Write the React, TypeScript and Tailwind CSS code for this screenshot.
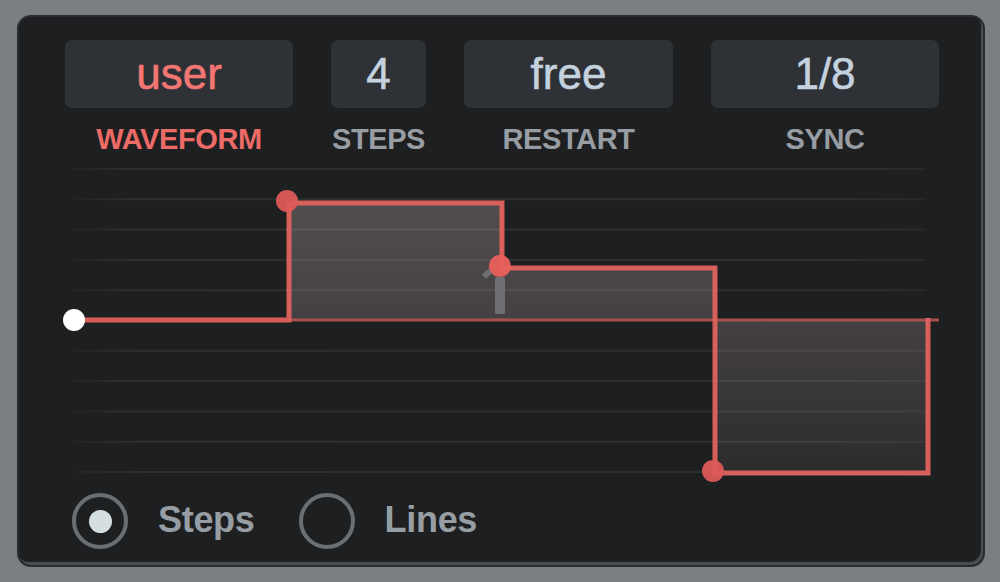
import React from "react";

const font = { fontFamily: '"Liberation Sans", Arial, sans-serif' };

function Field({ value, label, w, active }: { value: string; label: string; w: string; active?: boolean }) {
  return (
    <div className={`flex flex-col items-center ${w}`}>
      <div
        className={`w-full h-[68px] rounded-[7px] bg-[#2e3135] flex items-center justify-center text-[44px] [-webkit-text-stroke:0.6px_currentColor] ${
          active ? "text-[#f27773]" : "text-[#c4d1de]"
        }`}
      >
        {value}
      </div>
      <div
        className={`mt-[14px] h-[34px] leading-[34px] text-[29px] font-bold tracking-[-0.4px] ${
          active ? "text-[#ec6b67]" : "text-[#979da2]"
        }`}
      >
        {label}
      </div>
    </div>
  );
}

function Chart() {
  const grid = [169, 199.3, 229.6, 259.9, 290.2, 350.8, 381.1, 411.4, 441.7, 472];
  return (
    <svg width="964" height="325" viewBox="19 160 964 325" className="block">
      <defs>
        <linearGradient id="gl" x1="73" y1="0" x2="926" y2="0" gradientUnits="userSpaceOnUse">
          <stop offset="0" stopColor="#ffffff" stopOpacity="0.02" />
          <stop offset="0.08" stopColor="#ffffff" stopOpacity="0.075" />
          <stop offset="0.9" stopColor="#ffffff" stopOpacity="0.07" />
          <stop offset="1" stopColor="#ffffff" stopOpacity="0.045" />
        </linearGradient>
        <linearGradient id="fill" x1="0" y1="200" x2="0" y2="475" gradientUnits="userSpaceOnUse">
          <stop offset="0" stopColor="#dcc4c4" stopOpacity="0.28" />
          <stop offset="0.45" stopColor="#dcc4c4" stopOpacity="0.2" />
          <stop offset="1" stopColor="#dcc4c4" stopOpacity="0.07" />
        </linearGradient>
      </defs>
      {grid.map((y) => (
        <line key={y} x1="73" x2="926" y1={y} y2={y} stroke="url(#gl)" strokeWidth="2" />
      ))}
      <rect x="289" y="203" width="213" height="117" fill="url(#fill)" />
      <rect x="502" y="268" width="213" height="52" fill="url(#fill)" />
      <rect x="715" y="320" width="213" height="153" fill="url(#fill)" />
      <line x1="289" x2="939" y1="320" y2="320" stroke="#b4534f" strokeOpacity="0.9" strokeWidth="3" />
      <path
        d="M74 320 H289 V203 H502 V268 H715 V473 H928 V318"
        fill="none"
        stroke="#e4645f"
        strokeOpacity="0.93"
        strokeWidth="5"
        strokeLinejoin="miter"
      />
      <rect x="495" y="277" width="10" height="37" rx="1.5" fill="#6c6e71" />
      <rect x="483" y="271" width="9" height="6" fill="#6c6e71" transform="rotate(-40 487 274)" />
      <circle cx="287" cy="201" r="11" fill="#dc5b57" fillOpacity="0.95" />
      <circle cx="500" cy="266" r="11" fill="#e9615d" fillOpacity="0.95" />
      <circle cx="713" cy="471" r="11" fill="#dc5b57" fillOpacity="0.95" />
      <circle cx="74" cy="320" r="11" fill="#ffffff" />
    </svg>
  );
}

function Radio({ checked, label }: { checked?: boolean; label: string }) {
  return (
    <div className="flex items-center">
      <div className="w-[56px] h-[56px] rounded-full border-[4px] border-[#6a6f73] flex items-center justify-center">
        {checked && <div className="w-[23px] h-[23px] rounded-full bg-[#d5dfe2]" />}
      </div>
      <div className="ml-[30px] text-[36px] font-bold text-[#979ea3] tracking-[-0.3px] -mt-[3px]">{label}</div>
    </div>
  );
}

export default function App() {
  return (
    <div className="w-[1000px] h-[582px] bg-[#7b7f81] pt-[15px] pl-[17px] pr-[15px] pb-[15px]" style={font}>
      <div className="h-full rounded-[14px] border-2 border-[#2a2c2f] bg-[#1e1f21] shadow-[inset_-2px_-3px_0_#4a4e51] flex flex-col overflow-hidden">
        <div className="flex gap-[38px] pl-[46px] pt-[23px]">
          <Field value="user" label="WAVEFORM" w="w-[228px]" active />
          <Field value="4" label="STEPS" w="w-[95px]" />
          <Field value="free" label="RESTART" w="w-[209px]" />
          <Field value="1/8" label="SYNC" w="w-[228px]" />
        </div>
        <div className="mt-[4px]">
          <Chart />
        </div>
        <div className="mt-[8px] pl-[53px] flex items-center gap-[44px]">
          <Radio checked label="Steps" />
          <Radio label="Lines" />
        </div>
      </div>
    </div>
  );
}
